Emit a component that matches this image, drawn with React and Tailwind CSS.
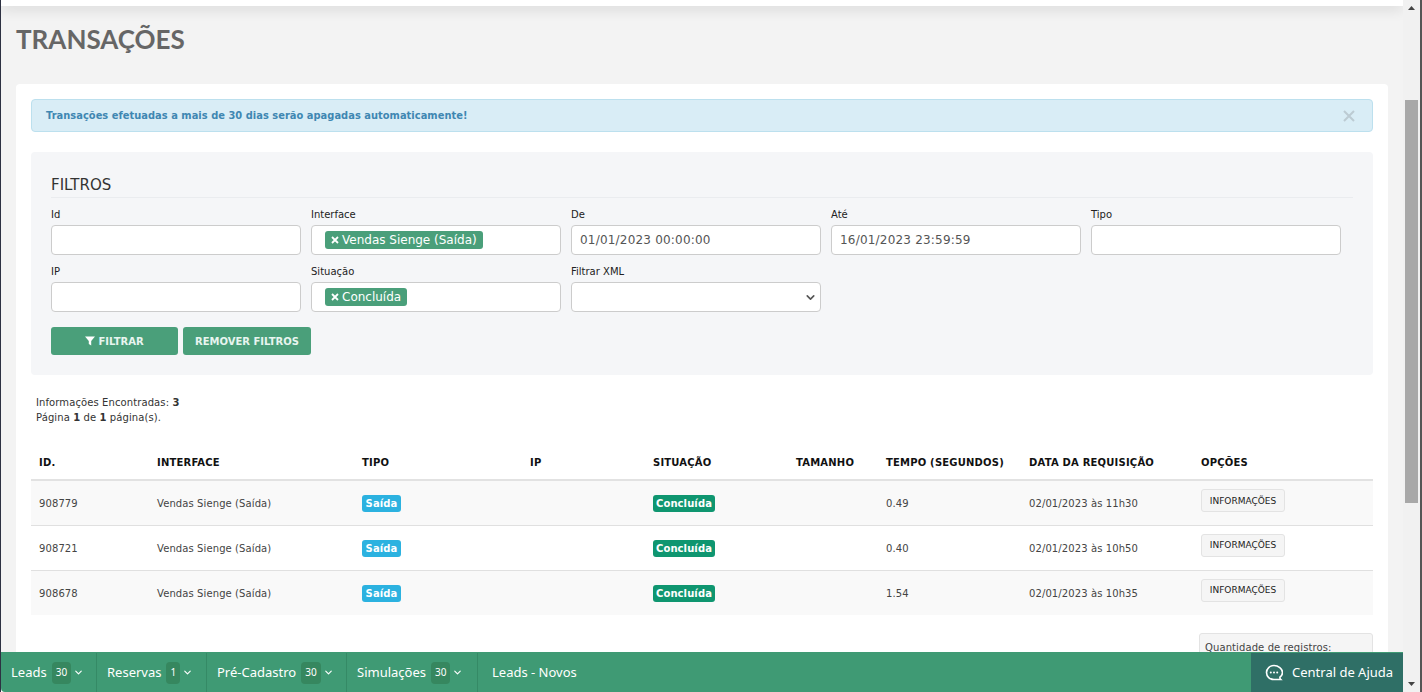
import React from "react";
import { ChevronDown } from "lucide-react";

const verdana = "font-['DejaVu_Sans',sans-serif]";

const rows = [
  { id: "908779", tempo: "0.49", data: "02/01/2023 às 11h30", bg: "bg-[#f9f9f9]" },
  { id: "908721", tempo: "0.40", data: "02/01/2023 às 10h50", bg: "bg-white" },
  { id: "908678", tempo: "1.54", data: "02/01/2023 às 10h35", bg: "bg-[#f9f9f9]" },
];

const menu = [
  { label: "Leads", count: "30", w: "w-[96px]" },
  { label: "Reservas", count: "1", w: "w-[110px]" },
  { label: "Pré-Cadastro", count: "30", w: "w-[140px]" },
  { label: "Simulações", count: "30", w: "w-[131px]" },
];

function Label({ children }) {
  return <label className="block h-[20px] text-[10px] leading-[20px] text-[#222]">{children}</label>;
}

function Field({ label, value }) {
  return (
    <div>
      <Label>{label}</Label>
      <div className="h-[30px] rounded-[4px] border border-[#ccc] bg-white pl-[8px] text-[12px] leading-[29px] tracking-[0.2px] text-[#555]">
        {value}
      </div>
    </div>
  );
}

function TagField({ label, tag }) {
  return (
    <div>
      <Label>{label}</Label>
      <div className="flex h-[30px] items-center rounded-[4px] border border-[#ccc] bg-white pl-[13px]">
        <span className="flex h-[18px] items-center gap-[3px] rounded-[3px] bg-[#4a9f7a] px-[6px] text-[12px] text-white">
          <svg width="8" height="8" viewBox="0 0 8 8">
            <path d="M1 1l6 6M7 1L1 7" stroke="white" strokeWidth="1.8" />
          </svg>
          {tag}
        </span>
      </div>
    </div>
  );
}

function ChatIcon() {
  return (
    <svg width="18" height="18" viewBox="0 0 18 18" fill="none">
      <path
        d="M9 1.5C4.8 1.5 1.5 4.6 1.5 8.6S4.8 15.5 9 15.5h6.8c-.7-.7-1-1.5-.9-2.4 1.6-1.2 2.6-2.8 2.6-4.5C17.5 4.6 13.2 1.5 9 1.5Z"
        stroke="white"
        strokeWidth="1.6"
      />
      <circle cx="5.8" cy="8.5" r="1" fill="white" />
      <circle cx="9" cy="8.5" r="1" fill="white" />
      <circle cx="12.2" cy="8.5" r="1" fill="white" />
    </svg>
  );
}

function App() {
  return (
    <div className={`flex h-[692px] w-[1422px] overflow-hidden bg-white ${verdana}`}>
      <div className="flex w-[1403px] shrink-0 flex-col border-l border-[#2d3142]">
        <div className="flex h-[652px] flex-col overflow-hidden bg-[#f3f3f3]">
          <div className="relative h-[6px] shrink-0 bg-white shadow-[0_2px_14px_rgba(0,0,0,0.18)]" />
          <h1 className="mt-[17px] h-[61px] shrink-0 pl-[15px] font-['Lato',sans-serif] text-[26px] leading-[32px] font-bold text-[#666]">
            TRANSAÇÕES
          </h1>

          <div className="ml-[15px] w-[1372px] shrink-0 rounded-[4px] bg-white p-[15px]">
            <div className="flex h-[33px] items-center justify-between rounded-[4px] border border-[#bce0ee] bg-[#d9edf6] pr-[17px] pl-[14px]">
              <span className="pt-[1px] text-[9.9px] font-bold tracking-[0.03px] text-[#3f87b2]">
                Transações efetuadas a mais de 30 dias serão apagadas automaticamente!
              </span>
              <svg width="12" height="12" viewBox="0 0 12 12">
                <path d="M1 1l10 10M11 1L1 11" stroke="#bccbd3" strokeWidth="2" />
              </svg>
            </div>

            <div className="mt-[20px] h-[223px] rounded-[4px] bg-[#f5f6f8] px-[20px] pt-[22px]">
              <div className="h-[24px] border-b border-[#eaecef] text-[15px] leading-[22px] text-[#333]">FILTROS</div>
              <div className="mt-[7px] grid w-[1290px] grid-cols-[repeat(5,250px)] gap-x-[10px] gap-y-[7px]">
                <Field label="Id" />
                <TagField label="Interface" tag="Vendas Sienge (Saída)" />
                <Field label="De" value="01/01/2023 00:00:00" />
                <Field label="Até" value="16/01/2023 23:59:59" />
                <Field label="Tipo" />
                <Field label="IP" />
                <TagField label="Situação" tag="Concluída" />
                <div>
                  <Label>Filtrar XML</Label>
                  <div className="flex h-[30px] items-center justify-end rounded-[4px] border border-[#ccc] bg-white pr-[3px]">
                    <ChevronDown size={13} strokeWidth={3} color="#555" />
                  </div>
                </div>
              </div>
              <div className="mt-[15px] flex gap-[5px]">
                <button className="flex h-[28px] w-[127px] items-center justify-center gap-[3px] rounded-[3px] bg-[#4a9f7a] text-[10px] font-bold text-[#e8f5ef]">
                  <svg width="10" height="10" viewBox="0 0 10 10">
                    <path d="M0 .5h10L6.2 5v4.5L3.8 8V5Z" fill="white" />
                  </svg>
                  FILTRAR
                </button>
                <button className="h-[28px] w-[128px] rounded-[3px] bg-[#4a9f7a] text-[10px] font-bold text-[#e8f5ef]">
                  REMOVER FILTROS
                </button>
              </div>
            </div>

            <div className="mt-[20px] pl-[5px] text-[10px] leading-[15px] tracking-[0.1px] text-[#333]">
              <p>
                Informações Encontradas: <b>3</b>
              </p>
              <p>
                Página <b>1</b> de <b>1</b> página(s).
              </p>
            </div>

            <table className="mt-[16px] w-[1342px] table-fixed text-left">
              <colgroup>
                <col className="w-[118px]" />
                <col className="w-[205px]" />
                <col className="w-[168px]" />
                <col className="w-[123px]" />
                <col className="w-[143px]" />
                <col className="w-[90px]" />
                <col className="w-[143px]" />
                <col className="w-[172px]" />
                <col className="w-[180px]" />
              </colgroup>
              <thead>
                <tr className="h-[39px] border-b-2 border-[#e2e2e2] text-[10px] tracking-[0.2px] text-[#111]">
                  <th className="pt-[5px] pl-[8px] font-bold">ID.</th>
                  <th className="pt-[5px] pl-[8px] font-bold">INTERFACE</th>
                  <th className="pt-[5px] pl-[8px] font-bold">TIPO</th>
                  <th className="pt-[5px] pl-[8px] font-bold">IP</th>
                  <th className="pt-[5px] pl-[8px] font-bold">SITUAÇÃO</th>
                  <th className="pt-[5px] pl-[8px] font-bold">TAMANHO</th>
                  <th className="pt-[5px] pl-[8px] font-bold whitespace-nowrap">TEMPO (SEGUNDOS)</th>
                  <th className="pt-[5px] pl-[8px] font-bold whitespace-nowrap">DATA DA REQUISIÇÃO</th>
                  <th className="pt-[5px] pl-[8px] font-bold">OPÇÕES</th>
                </tr>
              </thead>
              <tbody>
                {rows.map((r) => (
                  <tr key={r.id} className={`h-[45px] border-b border-[#e0e0e0] text-[10px] tracking-[0.1px] text-[#444] last:border-b-0 ${r.bg}`}>
                    <td className="pt-[2px] pl-[8px]">{r.id}</td>
                    <td className="pt-[2px] pl-[8px]">Vendas Sienge (Saída)</td>
                    <td className="pt-[2px] pl-[8px]">
                      <span className="inline-block h-[17px] w-[39px] rounded-[3px] bg-[#2cb2e0] text-center text-[10px] leading-[17px] font-bold text-white">
                        Saída
                      </span>
                    </td>
                    <td />
                    <td className="pt-[2px] pl-[8px]">
                      <span className="inline-block h-[17px] w-[62px] rounded-[3px] bg-[#0f9670] text-center text-[10px] leading-[17px] font-bold text-white">
                        Concluída
                      </span>
                    </td>
                    <td />
                    <td className="pt-[2px] pl-[8px]">{r.tempo}</td>
                    <td className="pt-[2px] pl-[8px] whitespace-nowrap">{r.data}</td>
                    <td className="pl-[8px] align-top">
                      <button className="mt-[8px] h-[23px] w-[84px] rounded-[3px] border border-[#e3e3e3] bg-[#f5f5f5] text-[9px] leading-[20px] tracking-normal text-[#222]">
                        INFORMAÇÕES
                      </button>
                    </td>
                  </tr>
                ))}
              </tbody>
            </table>

            <div className="mt-[18px] ml-[1168px] h-[60px] w-[174px] rounded-[3px] border border-[#e3e3e3] bg-[#f5f5f5] px-[5px] pt-[6px] text-[10px] tracking-[0.1px] text-[#444]">
              Quantidade de registros:
            </div>
          </div>
        </div>

        <div className="flex h-[40px] shrink-0 items-center justify-between rounded-bl-[4px] bg-[#3f9a74] pt-[1px] text-[13px] text-white">
          <div className="flex h-full font-['Noto_Sans',sans-serif]">
            {menu.map((m) => (
              <div key={m.label} className={`flex h-full items-center border-r border-[#358a66] pl-[10px] ${m.w}`}>
                <span>{m.label}</span>
                <span className="ml-[5px] flex h-[22px] items-center justify-center rounded-[4px] bg-[#36875f] px-[4px] text-[10px]">
                  {m.count}
                </span>
                <ChevronDown size={11} strokeWidth={2.5} className="ml-[2px]" />
              </div>
            ))}
            <div className="flex h-full items-center pl-[14px]">Leads - Novos</div>
          </div>
          <div className="flex h-full w-[152px] items-center gap-[9px] bg-[#2f6f66] pl-[14px] font-['Noto_Sans',sans-serif] text-[13px]">
            <ChatIcon />
            Central de Ajuda
          </div>
        </div>
      </div>

      <div className="flex w-[19px] shrink-0 flex-col items-center border-r-2 border-[#555] bg-[#f1f1f1]">
        <svg width="9" height="6" viewBox="0 0 9 6" className="mt-[5px]">
          <path d="M4.5 1L8 5H1Z" fill="#444" />
        </svg>
        <div className="mt-[89px] h-[403px] w-[13px] shrink-0 bg-[#a8a8a8]" />
        <svg width="9" height="6" viewBox="0 0 9 6" className="mt-auto mb-[5px]">
          <path d="M4.5 5L8 1H1Z" fill="#444" />
        </svg>
      </div>
    </div>
  );
}

export default App;
